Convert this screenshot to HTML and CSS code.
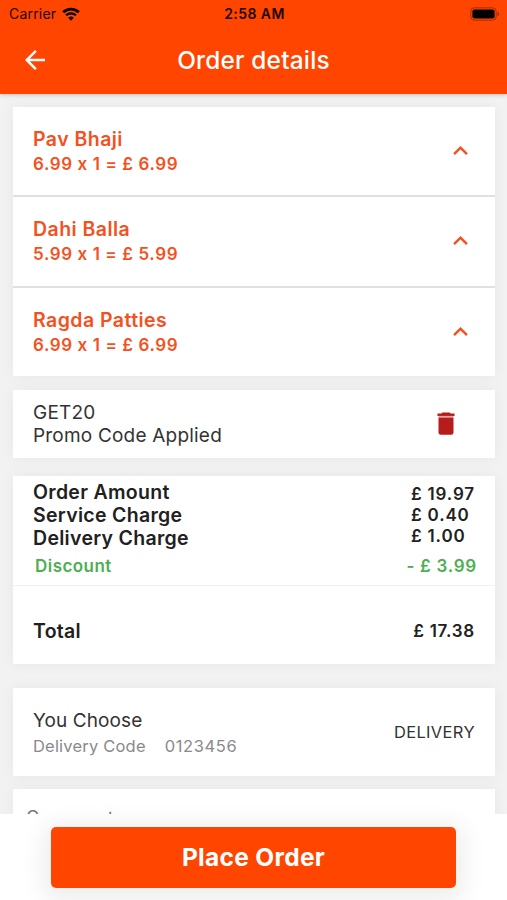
FILE: index.html
```html
<!DOCTYPE html>
<html lang="en">
    <head>
        <meta charset="utf-8">
        <title>Order details</title>
        <meta name="viewport" content="width=device-width, initial-scale=1">
        <link rel="stylesheet" href="styles.css">
    </head>
    <body>
        <header class="header">
            <div class="statusBar">
                <div class="carrier">
                    <span class="carrierName">Carrier</span>
                    <svg class="wifi" width="18" height="14" viewBox="0 0 18 14">
                        <path d="M1.2 5.2a11.2 11.2 0 0 1 15.6 0" fill="none" stroke="#000" stroke-width="2.8"/>
                        <path d="M4.1 8.3a7 7 0 0 1 9.8 0" fill="none" stroke="#000" stroke-width="2.3"/>
                        <path d="M9 13.8L6.2 10.8a4.1 4.1 0 0 1 5.6 0z"/>
                    </svg>
                </div>
                <div class="clock">2:58 AM</div>
                <svg class="battery" width="30" height="14" viewBox="0 0 30 14">
                    <rect x="0.8" y="0.8" width="25.4" height="12.4" rx="3.6" fill="none" stroke="#000" stroke-opacity="0.35"/>
                    <rect x="2.4" y="2.4" width="22.2" height="9.2" rx="2"/>
                    <path d="M27.6 4.8v4.4q1.6-0.7 1.6-2.2t-1.6-2.2z" fill-opacity="0.4"/>
                </svg>
            </div>
            <div class="titleBar">
                <svg class="back" width="20" height="20" viewBox="4 4 16 16">
                    <path fill="#fff" d="M20 11H7.83l5.59-5.59L12 4l-8 8 8 8 1.41-1.41L7.83 13H20v-2z"/>
                </svg>
                <h1 class="title">Order details</h1>
            </div>
        </header>

        <main class="content">
            <section class="items">
                <div class="item">
                    <div>
                        <div class="itemName">Pav Bhaji</div>
                        <div class="itemPrice">6.99 x 1 = £ 6.99</div>
                    </div>
                    <svg class="chevron" width="15" height="9" viewBox="6 8 12 7.4"><path fill="#f4511e" d="M12 8l-6 6 1.41 1.41L12 10.83l4.59 4.58L18 14z"/></svg>
                </div>
                <div class="item">
                    <div>
                        <div class="itemName">Dahi Balla</div>
                        <div class="itemPrice">5.99 x 1 = £ 5.99</div>
                    </div>
                    <svg class="chevron" width="15" height="9" viewBox="6 8 12 7.4"><path fill="#f4511e" d="M12 8l-6 6 1.41 1.41L12 10.83l4.59 4.58L18 14z"/></svg>
                </div>
                <div class="item">
                    <div>
                        <div class="itemName">Ragda Patties</div>
                        <div class="itemPrice">6.99 x 1 = £ 6.99</div>
                    </div>
                    <svg class="chevron" width="15" height="9" viewBox="6 8 12 7.4"><path fill="#f4511e" d="M12 8l-6 6 1.41 1.41L12 10.83l4.59 4.58L18 14z"/></svg>
                </div>
            </section>

            <section class="promo">
                <div class="promoText">
                    <div class="promoCode">GET20</div>
                    <div>Promo Code Applied</div>
                </div>
                <svg class="trash" width="18" height="23" viewBox="0 0 18 23">
                    <path fill="#b71c1c" d="M5.4 0.4h7.2l1 1.2H17.5v2.3H0.5V1.6H4.4z"/>
                    <path fill="#e9a3a3" d="M1.5 3.9h15v1.5h-15z"/>
                    <path fill="#b71c1c" d="M1.5 5.4h15V20.4a2.3 2.3 0 0 1-2.3 2.3H3.8a2.3 2.3 0 0 1-2.3-2.3z"/>
                </svg>
            </section>

            <section class="summary">
                <div class="charges">
                    <div class="labels">
                        <div>Order Amount</div>
                        <div>Service Charge</div>
                        <div>Delivery Charge</div>
                    </div>
                    <div class="amounts">
                        <div>£ 19.97</div>
                        <div>£ 0.40</div>
                        <div>£ 1.00</div>
                    </div>
                </div>
                <div class="discount">
                    <span>Discount</span>
                    <span class="discountAmount">- £ 3.99</span>
                </div>
                <div class="total">
                    <span>Total</span>
                    <span class="totalAmount">£ 17.38</span>
                </div>
            </section>

            <section class="choose">
                <div>
                    <div class="chooseTitle">You Choose</div>
                    <div class="deliveryCode"><span>Delivery Code</span><span class="code">0123456</span></div>
                </div>
                <div class="method">DELIVERY</div>
            </section>

            <section class="comment">Comment</section>
        </main>

        <footer class="footer">
            <div class="placeOrder">Place Order</div>
        </footer>
    </body>
</html>
```

FILE: styles.css
```css
* {
    box-sizing: border-box;
}
body {
    margin: 0;
    height: 900px;
    display: flex;
    flex-direction: column;
    overflow: hidden;
    font-family: Inter, "Liberation Sans", sans-serif;
    color: #212121;
    background-color: #f2f2f2;
    white-space: nowrap;
}
svg {
    display: block;
    flex: none;
}
.header {
    position: relative;
    z-index: 1;
    flex: none;
    height: 94px;
    background-color: #ff4500;
    box-shadow: 0 1px 4px rgba(0, 0, 0, 0.2);
}
.statusBar {
    height: 27px;
    padding: 0 7px 0 9px;
    display: grid;
    grid-template-columns: 1fr auto 1fr;
    align-items: center;
    color: #1a0700;
}
.carrier {
    display: flex;
    align-items: center;
    gap: 6px;
    font-size: 14px;
    letter-spacing: 0.2px;
}
.clock {
    font-size: 14px;
    font-weight: 600;
    letter-spacing: 0.45px;
}
.battery {
    justify-self: end;
}
.titleBar {
    height: 66px;
    display: grid;
    grid-template-columns: 1fr auto 1fr;
    align-items: center;
    padding: 0 25px;
    color: #fff;
}
.title {
    margin: -1px 0 0;
    font-size: 24.4px;
    font-weight: 500;
    letter-spacing: 0.2px;
}
.content {
    flex: 1;
    min-height: 0;
    overflow: hidden;
    padding: 13px 12px 0 13px;
}
.items, .promo, .summary, .choose, .comment {
    background-color: #fff;
    box-shadow: 0 0 14px rgba(0, 0, 0, 0.05);
}
.item {
    height: 90px;
    padding: 19px 27px 0 20px;
    display: flex;
    justify-content: space-between;
    color: #f4511e;
    border-bottom: 2px solid #e0e0e0;
}
.item + .item {
    height: 91px;
}
.item:last-child {
    height: 88px;
    border-bottom: 0;
}
.itemName {
    font-size: 19.5px;
    line-height: 27px;
    font-weight: 600;
    letter-spacing: 0.45px;
}
.itemPrice {
    font-size: 17px;
    line-height: 23px;
    font-weight: 600;
    letter-spacing: 0.6px;
}
.chevron {
    margin-top: 20px;
}
.promo {
    height: 68px;
    margin-top: 14px;
    padding: 0 40px 0 20px;
    display: flex;
    align-items: center;
    justify-content: space-between;
    color: #333;
}
.promoText {
    font-size: 19px;
    line-height: 23px;
    letter-spacing: 0.2px;
}
.trash {
    margin-bottom: 2px;
}
.summary {
    height: 188px;
    margin-top: 18px;
}
.charges {
    padding: 5px 20px 0;
    display: flex;
    justify-content: space-between;
}
.labels {
    font-size: 19.5px;
    line-height: 23px;
    font-weight: 600;
    letter-spacing: 0.3px;
}
.amounts {
    padding-top: 3px;
    font-size: 17px;
    line-height: 21px;
    font-weight: 600;
    letter-spacing: 0.85px;
}
.discount {
    height: 36px;
    padding: 0 18px 4px 22px;
    display: flex;
    align-items: center;
    justify-content: space-between;
    font-size: 17px;
    font-weight: 600;
    letter-spacing: 0.45px;
    color: #4caf50;
    border-bottom: 1px solid #f1f1f1;
}
.total {
    padding: 31px 20px 0;
    display: flex;
    align-items: center;
    justify-content: space-between;
    font-size: 19.5px;
    line-height: 28px;
    font-weight: 600;
    letter-spacing: 0.3px;
}
.discountAmount, .totalAmount {
    font-size: 17px;
    letter-spacing: 0.75px;
}
.choose {
    height: 88px;
    margin-top: 24px;
    padding: 2px 20px 0;
    display: flex;
    align-items: center;
    justify-content: space-between;
    color: #333;
}
.chooseTitle {
    font-size: 19px;
    line-height: 26px;
    letter-spacing: 0.1px;
}
.deliveryCode {
    display: flex;
    gap: 19px;
    font-size: 16.5px;
    line-height: 25px;
    letter-spacing: 0.2px;
    color: #8a8a8a;
}
.code {
    letter-spacing: 0.6px;
}
.method {
    margin-top: -2px;
    font-size: 16.5px;
    letter-spacing: 0.35px;
}
.comment {
    height: 80px;
    margin-top: 13px;
    padding: 17px 13px;
    font-size: 18px;
    line-height: 24px;
    letter-spacing: 0.85px;
    color: #757575;
}
.footer {
    flex: none;
    height: 86px;
    padding: 13px 51px 12px;
    background-color: #fff;
}
.placeOrder {
    position: relative;
    height: 61px;
    border-radius: 5px;
    background-color: #ff4500;
    box-shadow: 0 5px 24px 8px rgba(0, 0, 0, 0.07);
    color: #fff;
    font-size: 24.5px;
    line-height: 61px;
    font-weight: 700;
    letter-spacing: 0.3px;
    text-align: center;
}
```
